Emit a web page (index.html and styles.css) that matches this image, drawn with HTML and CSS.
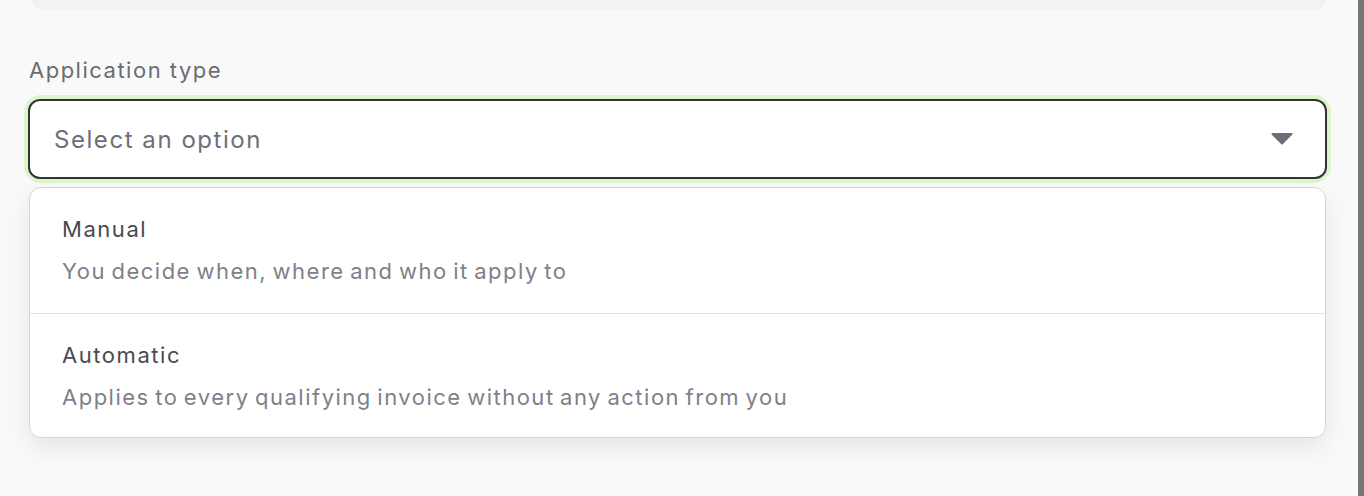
FILE: index.html
```html
<!DOCTYPE html>
<html lang="en">
<head>
  <meta charset="UTF-8" />
  <meta name="viewport" content="width=device-width, initial-scale=1.0" />
  <title>Application type</title>
  <link rel="stylesheet" href="styles.css">
</head>
<body>
  <div class="page">
    <main class="content">
      <div class="top-card"></div>

      <!-- Application type field -->
      <div class="field">
        <label class="field-label" for="appType">Application type</label>
        <div class="select-ring">
          <button class="select" id="appType" type="button">
            <span class="select-placeholder">Select an option</span>
            <svg class="caret" width="22" height="12" viewBox="0 0 22 12">
              <path d="M1.5 0h19a1 1 0 0 1 .7 1.7l-9.5 9.6a1 1 0 0 1-1.4 0L0.8 1.7A1 1 0 0 1 1.5 0z" fill="#6d6d78" />
            </svg>
          </button>
        </div>

        <ul class="options">
          <li class="option">
            <span class="option-title">Manual</span>
            <span class="option-desc">You decide when, where and who it apply to</span>
          </li>
          <li class="option">
            <span class="option-title">Automatic</span>
            <span class="option-desc">Applies to every qualifying invoice without any action from you</span>
          </li>
        </ul>
      </div>
    </main>
    <div class="scrollbar"></div>
  </div>
</body>
</html>
```

FILE: styles.css
```css
:root {
  --bg: #f9f9f9;
  --card-muted: #f2f2f2;
  --text-label: #6b6b70;
  --text-title: #4a4a52;
  --text-muted: #80808a;
  --border-dark: #333333;
  --focus-ring: #dcf5cc;
  --line: #e2e2e8;
  --radius: 12px;
}

* {
  box-sizing: border-box;
}

html, body {
  height: 100%;
}

body {
  margin: 0;
  font-family: 'Inter', sans-serif;
  background-color: var(--bg);
  overflow: hidden;
}

.page {
  display: flex;
  height: 100%;
}

.content {
  flex: 1;
  padding: 0 32px 0 29px;
}

.scrollbar {
  width: 6px;
  background: #767676;
}

.top-card {
  height: 10px;
  margin-left: 3px;
  background: var(--card-muted);
  border-radius: 0 0 20px 20px;
}

.field {
  margin-top: 45px;
}

.field-label {
  display: block;
  font-size: 22px;
  line-height: 30px;
  letter-spacing: 1.5px;
  color: var(--text-label);
  margin-bottom: 10px;
}

.select-ring {
  margin: 0 -5px;
  padding: 4px;
  border-radius: 17px;
  background: var(--focus-ring);
}

.select {
  display: flex;
  align-items: center;
  justify-content: space-between;
  width: 100%;
  height: 80px;
  padding: 0 32px 0 24px;
  background: #ffffff;
  border: 2px solid var(--border-dark);
  border-radius: var(--radius);
  font-family: inherit;
  cursor: pointer;
}

.select-placeholder {
  font-size: 24px;
  letter-spacing: 1.55px;
  color: #6e6e78;
}

.options {
  list-style: none;
  margin: 4px 0 0;
  padding: 0;
  background: #ffffff;
  border: 1px solid #d3d6dc;
  border-radius: var(--radius);
  box-shadow: 0 10px 24px rgba(0, 0, 0, 0.08);
}

.option {
  display: flex;
  flex-direction: column;
  gap: 12px;
  padding: 26px 32px 27px;
}

.option + .option {
  border-top: 1px solid var(--line);
  padding-bottom: 25px;
}

.option-title {
  font-size: 22px;
  line-height: 30px;
  letter-spacing: 1.55px;
  color: var(--text-title);
}

.option-desc {
  font-size: 22px;
  line-height: 30px;
  letter-spacing: 1.5px;
  word-spacing: -2.2px;
  color: var(--text-muted);
}
```
